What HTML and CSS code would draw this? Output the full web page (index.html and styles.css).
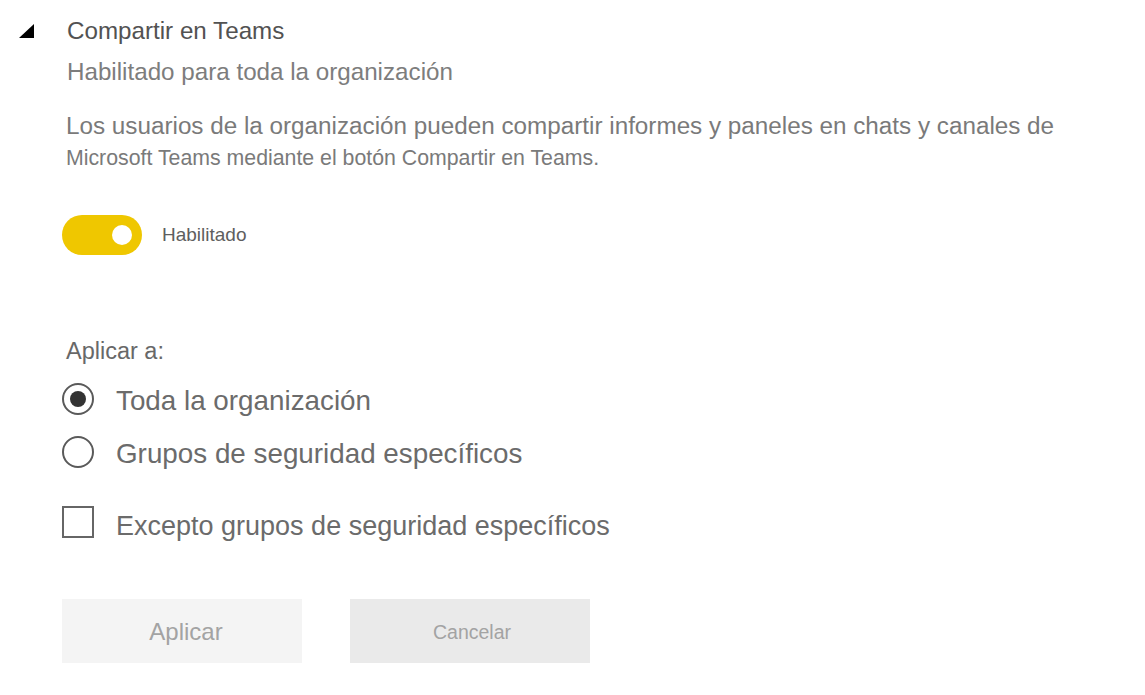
FILE: index.html
```html
<!DOCTYPE html>
<html lang="es">
<head>
<meta charset="utf-8">
<title>Compartir en Teams</title>
<link rel="stylesheet" href="styles.css">
</head>
<body>
<div class="panel">
  <div class="header">
    <svg class="caret" width="15" height="14" viewBox="0 0 15 14" aria-hidden="true"><polygon points="15,0 15,14 0,14" fill="#000"/></svg>
    <span class="title">Compartir en Teams</span>
  </div>
  <div class="subtitle">Habilitado para toda la organización</div>
  <div class="desc">
    <span class="desc-line1">Los usuarios de la organización pueden compartir informes y paneles en chats y canales de</span>
    <span class="desc-line2">Microsoft Teams mediante el botón Compartir en Teams.</span>
  </div>
  <div class="toggle-row">
    <span class="toggle"><span class="knob"></span></span>
    <span class="toggle-label">Habilitado</span>
  </div>
  <div class="apply-label">Aplicar a:</div>
  <div class="option first">
    <span class="radio checked"><span class="dot"></span></span>
    <span class="option-text">Toda la organización</span>
  </div>
  <div class="option second">
    <span class="radio"></span>
    <span class="option-text">Grupos de seguridad específicos</span>
  </div>
  <div class="option check">
    <span class="checkbox"></span>
    <span class="option-text except">Excepto grupos de seguridad específicos</span>
  </div>
  <div class="buttons">
    <button class="btn apply">Aplicar</button>
    <button class="btn cancel">Cancelar</button>
  </div>
</div>
</body>
</html>
```

FILE: styles.css
```css
html, body {
  margin: 0;
  padding: 0;
  background: #ffffff;
}

body {
  font-family: "Liberation Sans", Arial, sans-serif;
  width: 1145px;
  height: 695px;
  overflow: hidden;
}

.panel {
  display: flex;
  flex-direction: column;
  padding-top: 19px;
}

.header {
  display: flex;
  align-items: center;
  height: 24px;
  padding-left: 19px;
  gap: 33px;
}

.caret {
  display: block;
}

.title {
  font-size: 24.2px;
  line-height: 24px;
  color: #525252;
}

.subtitle {
  margin-top: 17px;
  padding-left: 67px;
  font-size: 24.2px;
  line-height: 24px;
  color: #7d7d7d;
}

.desc {
  margin-top: 26px;
  padding-left: 66px;
  display: flex;
  flex-direction: column;
  color: #7a7a7a;
}

.desc-line1 {
  font-size: 24.25px;
  line-height: 32px;
}

.desc-line2 {
  font-size: 21.3px;
  line-height: 32px;
}

.toggle-row {
  margin-top: 41px;
  padding-left: 62px;
  display: flex;
  align-items: center;
  gap: 20px;
  height: 40px;
}

.toggle {
  width: 80px;
  height: 40px;
  border-radius: 20px;
  background: #efc700;
  display: flex;
  align-items: center;
  justify-content: flex-end;
  padding-right: 10px;
  box-sizing: border-box;
}

.knob {
  width: 20px;
  height: 20px;
  border-radius: 50%;
  background: #ffffff;
}

.toggle-label {
  font-size: 19px;
  line-height: 24px;
  color: #5e5e5e;
}

.apply-label {
  margin-top: 84px;
  padding-left: 66px;
  font-size: 23.5px;
  line-height: 24px;
  color: #686868;
}

.option {
  display: flex;
  align-items: center;
  gap: 22px;
  padding-left: 62px;
  height: 32px;
}

.option.first {
  margin-top: 20px;
}

.option.second {
  margin-top: 21px;
}

.option.check {
  margin-top: 38px;
}

.radio {
  width: 32px;
  height: 32px;
  box-sizing: border-box;
  border: 2px solid #5a5a5a;
  border-radius: 50%;
  display: flex;
  align-items: center;
  justify-content: center;
  flex: none;
}

.dot {
  width: 16px;
  height: 16px;
  border-radius: 50%;
  background: #333333;
}

.checkbox {
  width: 32px;
  height: 32px;
  box-sizing: border-box;
  border: 2px solid #666666;
  flex: none;
}

.option-text {
  font-size: 27.8px;
  line-height: 32px;
  padding-top: 3px;
  color: #6b6b6b;
}

.option-text.except {
  font-size: 27px;
  padding-top: 7px;
}

.buttons {
  margin-top: 61px;
  padding-left: 62px;
  display: flex;
  gap: 48px;
}

.btn {
  width: 240px;
  height: 64px;
  border: none;
  font-family: "Liberation Sans", Arial, sans-serif;
  color: #a3a3a3;
  padding: 2px 0 0;
}

.btn.apply {
  background: #f4f4f4;
  font-size: 24px;
  padding-left: 8px;
}

.btn.cancel {
  background: #eaeaea;
  font-size: 19.5px;
  padding-left: 4px;
}
```
